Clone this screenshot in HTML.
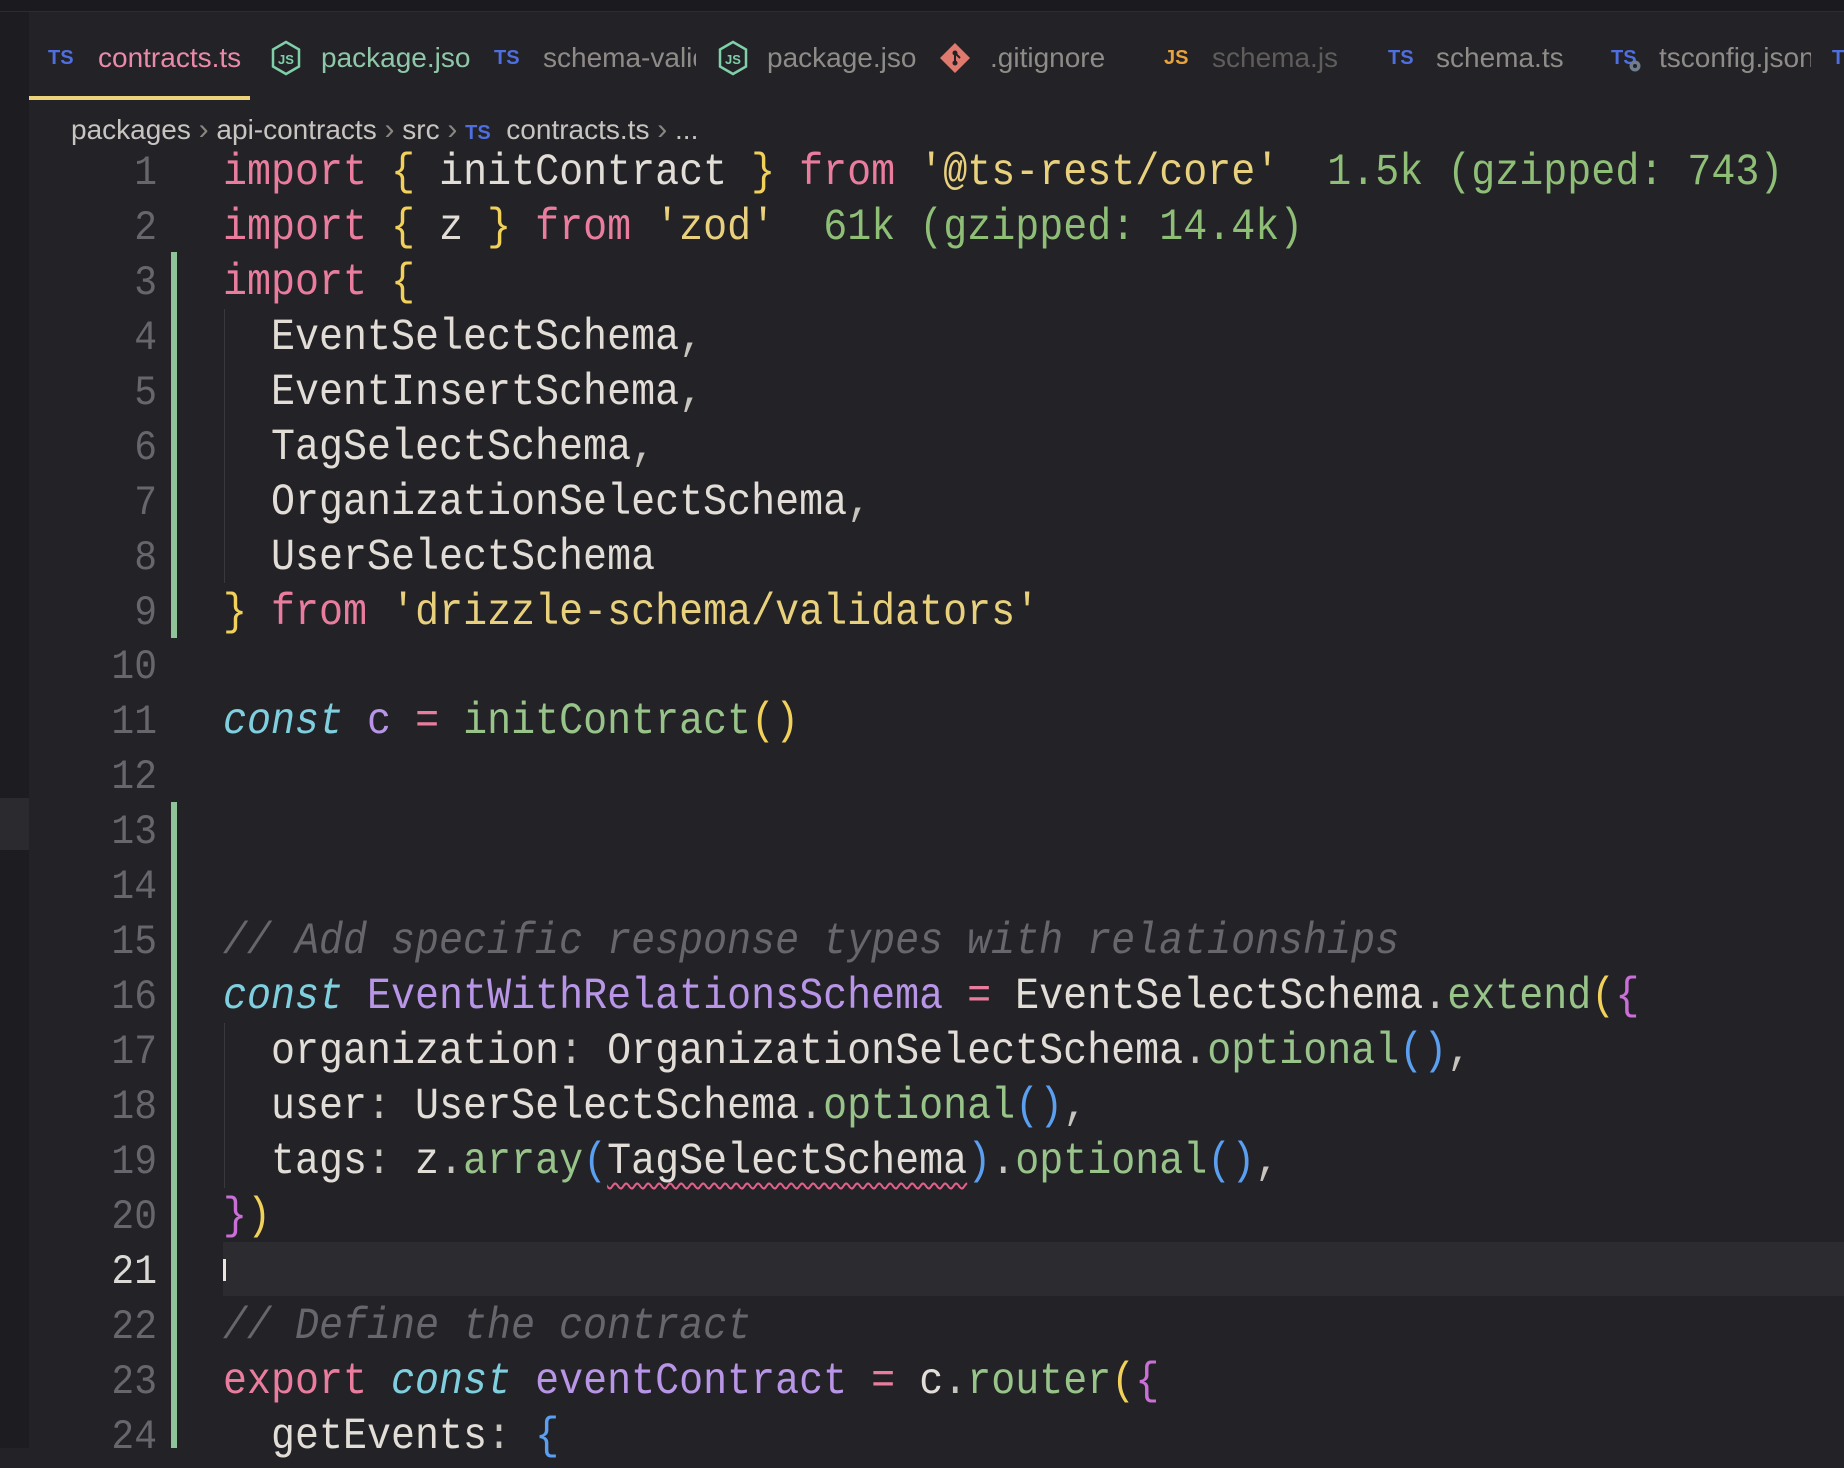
<!DOCTYPE html>
<html><head><meta charset="utf-8"><style>
html,body{margin:0;padding:0;}
body{width:1844px;height:1448px;background:#222227;position:relative;overflow:hidden;font-family:"Liberation Sans",sans-serif;}
.top{position:absolute;left:0;top:0;width:1844px;height:11px;background:#1b1b1f;border-bottom:1px solid #2c2c31;}
.side{position:absolute;left:0;top:12px;width:29px;height:1436px;background:#1d1d21;}
.side2{position:absolute;left:0;top:798px;width:29px;height:52px;background:#2a2a2f;}
.t{position:absolute;top:38px;height:40px;line-height:40px;font-size:28px;white-space:nowrap;overflow:hidden;color:#8f8b87;}
.ic{position:absolute;top:38px;height:40px;line-height:40px;font-size:20px;font-weight:bold;}
.ul{position:absolute;left:29px;top:96px;width:221px;height:4px;background:#ecd27a;}
.bc{position:absolute;top:110px;height:40px;line-height:40px;font-size:28px;color:#c8c4c0;white-space:nowrap;}
.ln{position:absolute;left:60px;width:97px;text-align:right;font-family:"Liberation Mono",monospace;font-size:38px;color:#66666c;height:55px;line-height:55px;transform:scaleY(1.1);}
.cl{position:absolute;left:223px;font-family:"Liberation Mono",monospace;font-size:40px;white-space:pre;color:#e2ddd6;height:55px;line-height:55px;transform:scaleY(1.12);transform-origin:0 50%;}
.bar{position:absolute;left:171px;width:6px;background:#8fc49a;}
.k{color:#ea7d9e}.y{color:#f2d15a}.s{color:#e8d07c}.g{color:#8fbf76}.c{color:#7fcfdf;font-style:italic}
.v{color:#b895e6}.f{color:#98c48a}.b{color:#5b9ff0}.p{color:#c7c3bd}.cm{color:#67666c;font-style:italic}.m{color:#c96fd6}
.sq{text-decoration:underline wavy #e0608a;text-underline-offset:8px;text-decoration-thickness:2px;}
.cur{position:absolute;left:223px;top:1242px;width:1621px;height:54px;background:#2b2b30;}
.guide{position:absolute;left:224px;width:1px;background:#38383d;}
.sep{color:#8a8680;font-size:30px;}
#code{position:absolute;left:0;top:3px;width:1844px;height:1448px;}
</style></head><body>
<div class="top"></div>
<div class="side"></div><div class="side2"></div>

<div class="ic" style="left:48px;color:#4f6fe0">TS</div>
<div class="t" style="left:98px;width:152px;color:#ea8aa8">contracts.ts</div>
<svg style="position:absolute;left:270px;top:40px" width="32" height="36" viewBox="0 0 32 36"><path d="M16 2 L29 9.5 V26.5 L16 34 L3 26.5 V9.5 Z" fill="none" stroke="#7fcfa8" stroke-width="2.5"/><text x="16" y="24" font-size="13" font-weight="bold" text-anchor="middle" fill="#7fcfa8" font-family="Liberation Sans">JS</text></svg>
<div class="t" style="left:321px;width:149px;color:#8fc8a8">package.json</div>
<div class="ic" style="left:494px;color:#4f6fe0">TS</div>
<div class="t" style="left:543px;width:153px">schema-validators.ts</div>
<svg style="position:absolute;left:717px;top:40px" width="32" height="36" viewBox="0 0 32 36"><path d="M16 2 L29 9.5 V26.5 L16 34 L3 26.5 V9.5 Z" fill="none" stroke="#7fcfa8" stroke-width="2.5"/><text x="16" y="24" font-size="13" font-weight="bold" text-anchor="middle" fill="#7fcfa8" font-family="Liberation Sans">JS</text></svg>
<div class="t" style="left:767px;width:150px">package.json</div>
<svg style="position:absolute;left:939px;top:42px" width="32" height="32" viewBox="0 0 32 32"><path d="M16 1 L31 16 L16 31 L1 16 Z" fill="#e07a6e"/><circle cx="16" cy="11" r="2.5" fill="#222227"/><circle cx="16" cy="21" r="2.5" fill="#222227"/><path d="M16 11 V21 M16 11 L21 16" stroke="#222227" stroke-width="2"/></svg>
<div class="t" style="left:990px;width:140px">.gitignore</div>
<div class="ic" style="left:1164px;color:#e8a33c">JS</div>
<div class="t" style="left:1212px;width:140px;color:#5f5c5a">schema.js</div>
<div class="ic" style="left:1388px;color:#4f6fe0">TS</div>
<div class="t" style="left:1436px;width:145px">schema.ts</div>
<div class="ic" style="left:1611px;color:#4f6fe0">TS</div>
<svg style="position:absolute;left:1627px;top:58px" width="16" height="16" viewBox="0 0 16 16"><circle cx="8" cy="8" r="5.5" fill="#6f7d8c"/><circle cx="8" cy="8" r="2" fill="#222227"/></svg>
<div class="t" style="left:1659px;width:152px">tsconfig.json</div>
<div class="ic" style="left:1832px;color:#4f6fe0">TS</div>
<div class="ul"></div>

<div class="bc" style="left:71px">packages <span class="sep">›</span> api-contracts <span class="sep">›</span> src <span class="sep">›</span> <b style="color:#4f6fe0;font-size:20px">TS</b>&nbsp; contracts.ts <span class="sep">›</span> ...</div>

<div class="cur"></div>
<div class="bar" style="top:252px;height:386px"></div>
<div class="bar" style="top:802px;height:646px"></div>
<div class="guide" style="top:309px;height:274px"></div>
<div class="guide" style="top:1023px;height:165px"></div>

<div id="code">
<div class="ln" style="top:143px">1</div><div class="cl" style="top:143px"><span class="k">import</span> <span class="y">{</span> initContract <span class="y">}</span> <span class="k">from</span> <span class="s">'@ts-rest/core'</span>  <span class="g">1.5k (gzipped: 743)</span></div>
<div class="ln" style="top:198px">2</div><div class="cl" style="top:198px"><span class="k">import</span> <span class="y">{</span> z <span class="y">}</span> <span class="k">from</span> <span class="s">'zod'</span>  <span class="g">61k (gzipped: 14.4k)</span></div>
<div class="ln" style="top:253px">3</div><div class="cl" style="top:253px"><span class="k">import</span> <span class="y">{</span></div>
<div class="ln" style="top:308px">4</div><div class="cl" style="top:308px">  EventSelectSchema<span class="p">,</span></div>
<div class="ln" style="top:363px">5</div><div class="cl" style="top:363px">  EventInsertSchema<span class="p">,</span></div>
<div class="ln" style="top:418px">6</div><div class="cl" style="top:418px">  TagSelectSchema<span class="p">,</span></div>
<div class="ln" style="top:473px">7</div><div class="cl" style="top:473px">  OrganizationSelectSchema<span class="p">,</span></div>
<div class="ln" style="top:528px">8</div><div class="cl" style="top:528px">  UserSelectSchema</div>
<div class="ln" style="top:583px">9</div><div class="cl" style="top:583px"><span class="y">}</span> <span class="k">from</span> <span class="s">'drizzle-schema/validators'</span></div>
<div class="ln" style="top:637px">10</div>
<div class="ln" style="top:692px">11</div><div class="cl" style="top:692px"><span class="c">const</span> <span class="v">c</span> <span class="k">=</span> <span class="f">initContract</span><span class="y">()</span></div>
<div class="ln" style="top:747px">12</div>
<div class="ln" style="top:802px">13</div>
<div class="ln" style="top:857px">14</div>
<div class="ln" style="top:912px">15</div><div class="cl" style="top:912px"><span class="cm">// Add specific response types with relationships</span></div>
<div class="ln" style="top:967px">16</div><div class="cl" style="top:967px"><span class="c">const</span> <span class="v">EventWithRelationsSchema</span> <span class="k">=</span> EventSelectSchema<span class="p">.</span><span class="f">extend</span><span class="y">(</span><span class="m">{</span></div>
<div class="ln" style="top:1022px">17</div><div class="cl" style="top:1022px">  organization<span class="p">:</span> OrganizationSelectSchema<span class="p">.</span><span class="f">optional</span><span class="b">()</span><span class="p">,</span></div>
<div class="ln" style="top:1077px">18</div><div class="cl" style="top:1077px">  user<span class="p">:</span> UserSelectSchema<span class="p">.</span><span class="f">optional</span><span class="b">()</span><span class="p">,</span></div>
<div class="ln" style="top:1132px">19</div><div class="cl" style="top:1132px">  tags<span class="p">:</span> z<span class="p">.</span><span class="f">array</span><span class="b">(</span><span class="sq">TagSelectSchema</span><span class="b">)</span><span class="p">.</span><span class="f">optional</span><span class="b">()</span><span class="p">,</span></div>
<div class="ln" style="top:1187px">20</div><div class="cl" style="top:1187px"><span class="m">}</span><span class="y">)</span></div>
<div class="ln" style="top:1242px;color:#dcdad6">21</div><div style="position:absolute;left:223px;top:1256px;width:3px;height:22px;background:#e8e4de"></div>
<div class="ln" style="top:1297px">22</div><div class="cl" style="top:1297px"><span class="cm">// Define the contract</span></div>
<div class="ln" style="top:1352px">23</div><div class="cl" style="top:1352px"><span class="k">export</span> <span class="c">const</span> <span class="v">eventContract</span> <span class="k">=</span> c<span class="p">.</span><span class="f">router</span><span class="y">(</span><span class="m">{</span></div>
<div class="ln" style="top:1407px">24</div><div class="cl" style="top:1407px">  getEvents<span class="p">:</span> <span class="b">{</span></div>
</div>
</body></html>
